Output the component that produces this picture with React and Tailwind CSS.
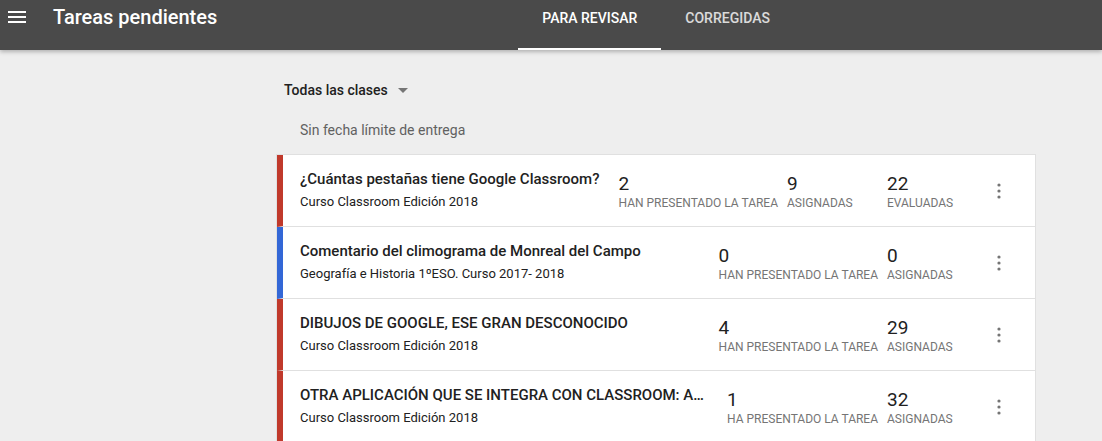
import React from 'react';

const tasks = [
  {
    title: '¿Cuántas pestañas tiene Google Classroom?',
    course: 'Curso Classroom Edición 2018',
    color: 'border-l-[#c0392b]',
    stats: [
      { n: 2, label: 'Han presentado la tarea' },
      { n: 9, label: 'Asignadas' },
      { n: 22, label: 'Evaluadas' },
    ],
  },
  {
    title: 'Comentario del climograma de Monreal del Campo',
    course: 'Geografía e Historia 1ºESO. Curso 2017- 2018',
    color: 'border-l-[#3367d6]',
    stats: [
      { n: 0, label: 'Han presentado la tarea' },
      { n: 0, label: 'Asignadas' },
    ],
  },
  {
    title: 'DIBUJOS DE GOOGLE, ESE GRAN DESCONOCIDO',
    course: 'Curso Classroom Edición 2018',
    color: 'border-l-[#c0392b]',
    stats: [
      { n: 4, label: 'Han presentado la tarea' },
      { n: 29, label: 'Asignadas' },
    ],
  },
  {
    title: 'OTRA APLICACIÓN QUE SE INTEGRA CON CLASSROOM: APPS SCRIPT',
    course: 'Curso Classroom Edición 2018',
    color: 'border-l-[#c0392b]',
    stats: [
      { n: 1, label: 'Ha presentado la tarea' },
      { n: 32, label: 'Asignadas' },
    ],
  },
];

const Kebab = () => (
  <svg width="24" height="24" viewBox="0 0 24 24" fill="#757575">
    <circle cx="12" cy="6" r="1.6" />
    <circle cx="12" cy="12" r="1.6" />
    <circle cx="12" cy="18" r="1.6" />
  </svg>
);

const App = () => {
  return (
    <div className="min-h-[441px] bg-[#eeeeee] font-['Roboto','Liberation_Sans',sans-serif]">
      {/* Top bar */}
      <header className="relative h-[50px] bg-[#4a4a4a] flex items-start shadow-[0_2px_4px_rgba(0,0,0,0.25)]">
        <div className="pl-[5px] pt-[5px]">
          <svg width="24" height="24" viewBox="0 0 24 24" fill="#ffffff">
            <rect x="3" y="6" width="18" height="2" />
            <rect x="3" y="11" width="18" height="2" />
            <rect x="3" y="16" width="18" height="2" />
          </svg>
        </div>
        <h1 className="ml-6 mt-[5px] text-[20px] leading-[24px] font-medium text-white">
          Tareas pendientes
        </h1>
        <nav className="ml-[301px] flex h-full">
          <div className="flex flex-col justify-between px-6 h-full">
            <span className="pt-[9px] text-[14px] leading-[18px] font-medium text-white uppercase">Para revisar</span>
            <span className="block h-[2px] -mx-6 bg-white" />
          </div>
          <div className="flex flex-col px-6 h-full">
            <span className="pt-[9px] text-[14px] leading-[18px] font-medium text-white/80 uppercase">Corregidas</span>
          </div>
        </nav>
      </header>

      {/* Content */}
      <main className="ml-[276px] w-[760px]">
        <div className="flex items-center gap-[10px] pl-2 pt-[30px]">
          <span className="text-[14px] leading-[20px] font-medium text-[#212121]">Todas las clases</span>
          <svg width="10" height="5" viewBox="0 0 10 5">
            <path d="M0 0 L10 0 L5 5 Z" fill="#757575" />
          </svg>
        </div>
        <div className="pl-6 mt-[20px] text-[14px] leading-[20px] text-[#616161]">
          Sin fecha límite de entrega
        </div>

        <div className="mt-[14px] bg-white border border-[#e0e0e0] border-b-0">
          {tasks.map((t, i) => (
            <div
              key={i}
              className={`h-[72px] flex items-center border-b border-[#e0e0e0] border-l-[6px] ${t.color}`}
            >
              <div className="flex-1 min-w-0 pl-[17px] pr-[14px] -mt-[1px]">
                <div className="truncate text-[15px] leading-[20px] font-medium text-[#212121]">{t.title}</div>
                <div className="mt-[4px] text-[13px] leading-[18px] text-[#212121]">{t.course}</div>
              </div>
              <div className="flex items-start pt-[2px]">
                {t.stats.map((s, j) => (
                  <div key={j} className="min-w-[100px] pr-[9px] flex flex-col">
                    <span className="text-[19px] leading-[22px] text-[#212121]">{s.n}</span>
                    <span className="text-[12px] leading-[16px] text-[#757575] uppercase whitespace-nowrap">{s.label}</span>
                  </div>
                ))}
              </div>
              <div className="pr-6">
                <Kebab />
              </div>
            </div>
          ))}
        </div>
      </main>
    </div>
  );
};

export default App;
